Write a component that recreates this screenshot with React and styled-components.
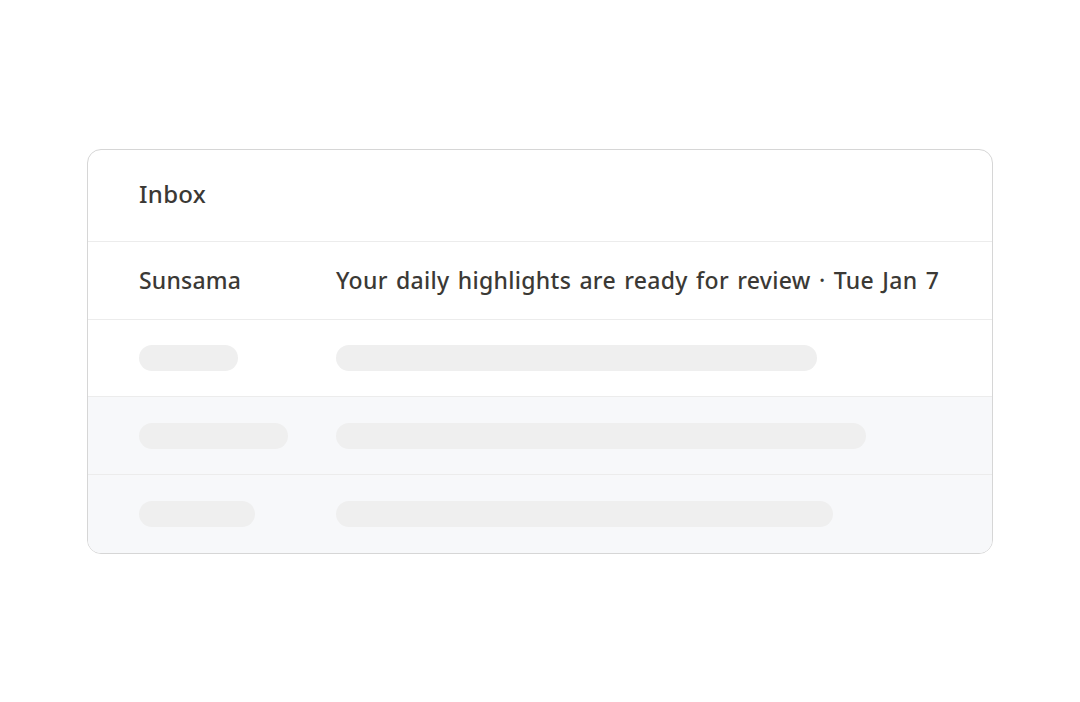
import React from "react";
import styled, { createGlobalStyle } from "styled-components";

const GlobalStyle = createGlobalStyle`
    html, body {
        margin: 0;
        padding: 0;
        background: #ffffff;
    }
    body {
        font-family: "Noto Sans", Lato, sans-serif;
        color: #3b3935;
    }
`;

const placeholders = [
    { sender: 99, subject: 481, shaded: false },
    { sender: 149, subject: 530, shaded: true },
    { sender: 116, subject: 497, shaded: true },
];

export default function App() {
    return (
        <Page>
            <GlobalStyle />
            <InboxCard>
                <Header>Inbox</Header>
                <Row>
                    <Sender>Sunsama</Sender>
                    <Subject>Your daily highlights are ready for review · Tue Jan 7</Subject>
                </Row>
                {placeholders.map((p, i) => (
                    <Row key={i} $shaded={p.shaded}>
                        <SenderCell>
                            <Pill style={{ width: p.sender }} />
                        </SenderCell>
                        <Pill style={{ width: p.subject }} />
                    </Row>
                ))}
            </InboxCard>
        </Page>
    );
}

const Page = styled.div`
    width: 1080px;
    height: 702px;
    display: flex;
    justify-content: center;
    padding-top: 149px;
    box-sizing: border-box;
`;

const InboxCard = styled.div`
    width: 906px;
    height: 405px;
    box-sizing: border-box;
    border: 1px solid #d6d6d6;
    border-radius: 14px;
    overflow: hidden;
    display: flex;
    flex-direction: column;
    background: #ffffff;
`;

const Header = styled.div`
    height: 92px;
    box-sizing: border-box;
    display: flex;
    align-items: center;
    padding-left: 51px;
    padding-bottom: 4px;
    font-size: 24px;
    font-weight: 500;
    letter-spacing: 0.3px;
    border-bottom: 1px solid #ececec;
`;

const Row = styled.div`
    height: 78px;
    box-sizing: border-box;
    display: flex;
    align-items: center;
    padding-left: 51px;
    background: ${(p) => (p.$shaded ? "#f7f8fa" : "#ffffff")};
    border-bottom: 1px solid #ececec;

    &:last-child {
        border-bottom: none;
    }
`;

const Sender = styled.div`
    width: 197px;
    font-size: 23px;
    font-weight: 500;
    letter-spacing: 0.2px;
    margin-top: -1px;
`;

const SenderCell = styled.div`
    width: 197px;
    display: flex;
`;

const Subject = styled.div`
    font-size: 23px;
    font-weight: 500;
    letter-spacing: 0.3px;
    word-spacing: 2px;
    white-space: nowrap;
    margin-top: -1px;
`;

const Pill = styled.div`
    height: 26px;
    border-radius: 13px;
    background: #efefef;
`;
